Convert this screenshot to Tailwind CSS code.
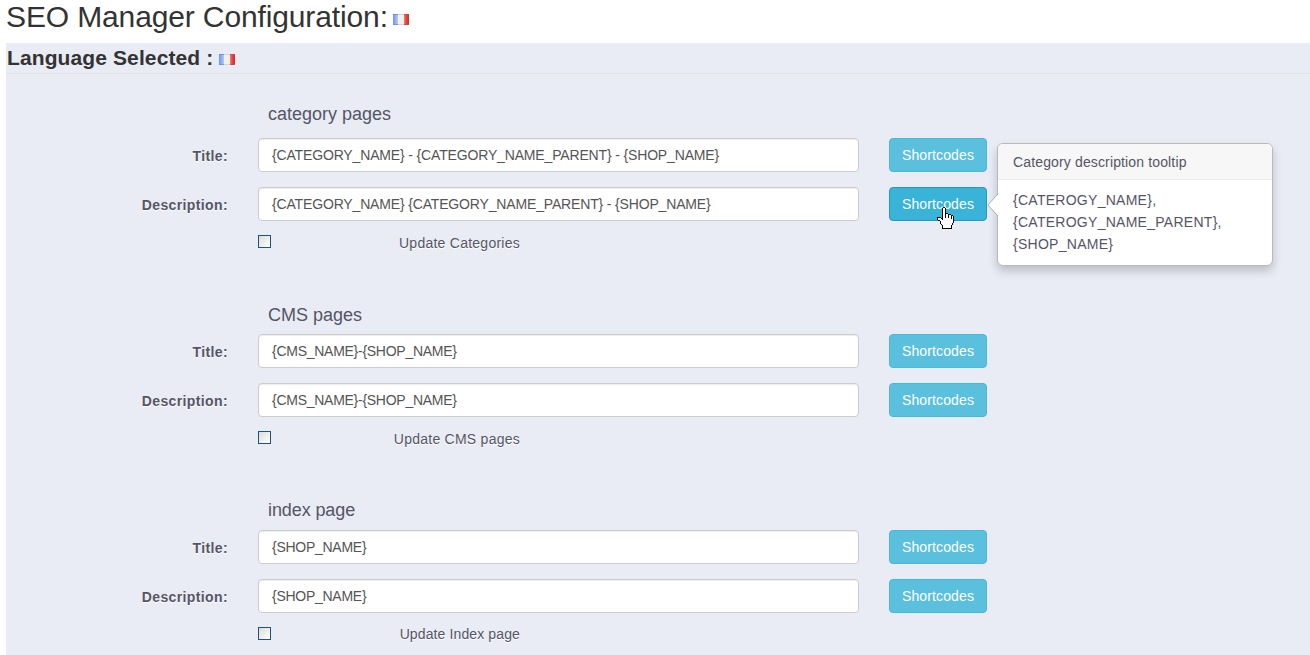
<!DOCTYPE html>
<html lang="en">
<head>
<meta charset="utf-8">
<title>SEO Manager Configuration</title>
<script src="https://cdn.jsdelivr.net/npm/@tailwindcss/browser@4"></script>
</head>
<body class="h-[655px] overflow-hidden bg-white pl-1.5 font-['Liberation_Sans',Arial,sans-serif] text-sm text-[#555566]">
<svg width="0" height="0" class="absolute">
  <defs>
    <linearGradient id="blue"><stop stop-color="#7094ea"/><stop offset="1" stop-color="#c3d3fa"/></linearGradient>
    <linearGradient id="red"><stop stop-color="#f0807a"/><stop offset=".5" stop-color="#e5403a"/><stop offset="1" stop-color="#d92a28"/></linearGradient>
    <symbol id="flag" viewBox="0 0 16 11">
      <rect width="6" height="11" fill="url(#blue)"/>
      <rect x="5" width="6" height="11" fill="#f0f0ee"/>
      <rect x="11" width="5" height="11" fill="url(#red)"/>
      <path d="M0 .5H5M0 10.500H5" stroke="#6f83cc" stroke-opacity=".7"/>
      <path d="M5 .5h6M5 10.500h6" stroke="#d6d3d0"/>
      <path d="M11 .5h5M11 10.500h5" stroke="#c94844" stroke-opacity=".8"/>
    </symbol>
  </defs>
</svg>
<h1 class="flex h-[43px] items-start text-[30px] leading-[33px] text-[#333]"><span class="w-[383px] tracking-[-0.13px] whitespace-nowrap">SEO Manager Configuration:</span><svg class="mt-3.5 ml-1 h-[11px] w-4"><use href="#flag"/></svg></h1>
<main class="h-[612px] bg-[#e9ecf5]">
  <h2 class="flex h-[31px] items-start border-b border-[#e2e4e8] pl-px text-[21px] leading-[30px] font-bold text-[#333]"><span class="w-[206px] tracking-[0.11px] whitespace-nowrap">Language Selected :</span><svg class="mt-[11px] ml-1.5 h-[11px] w-4"><use href="#flag"/></svg></h2>

  <section class="mt-5 h-[196px]">
    <h3 class="h-11 pt-2.5 pl-[262px] text-lg leading-5">category pages</h3>
    <div class="mb-[15px] flex h-[34px] items-center">
      <label class="w-[222px] pt-0.5 text-right font-bold tracking-[0.38px] text-shadow-[0_1px_0_#fff]">Title:</label>
      <div class="ml-[30px] flex h-[34px] w-[601px] items-center rounded-[4px] border border-[#ccc] bg-white px-[13px] tracking-[-0.155px] text-[#555] shadow-[inset_0_1px_1px_#00000013]">{CATEGORY_NAME} - {CATEGORY_NAME_PARENT} - {SHOP_NAME}</div>
      <button class="ml-[30px] h-[34px] w-[98px] rounded-[4px] border border-[#46b8da] bg-[#5bc0de] tracking-[0.12px] text-white">Shortcodes</button>
    </div>
    <div class="relative mb-[14px] flex h-[34px] items-center">
      <label class="w-[222px] pt-0.5 text-right font-bold tracking-[0.38px] text-shadow-[0_1px_0_#fff]">Description:</label>
      <div class="ml-[30px] flex h-[34px] w-[601px] items-center rounded-[4px] border border-[#ccc] bg-white px-[13px] tracking-[-0.16px] text-[#555] shadow-[inset_0_1px_1px_#00000013]">{CATEGORY_NAME} {CATEGORY_NAME_PARENT} - {SHOP_NAME}</div>
      <button class="ml-[30px] h-[34px] w-[98px] rounded-[4px] border border-[#269abc] bg-[#39b3d7] tracking-[0.12px] text-white">Shortcodes</button>
      <svg class="absolute top-[19px] left-[930px]" width="18" height="23" shape-rendering="crispEdges"><path d="M6.500 13V2.500L7.500 1.500H8.500L9.500 2.500V7.500H11.500L12.500 8.500H14.500L15.500 9.500H16.500L17.500 11V16.500L15.500 19.500V22.500H6.500V19.500L4.500 17.500V15.500L1.500 13.500V11.500H4.500Z" fill="#fff" stroke="#000"/><path d="M9.500 7V12M12.500 8V12M15.500 9V13" stroke="#000"/></svg>
      <div class="absolute -top-[44px] left-[991px] h-[123px] w-[276px] rounded-md border border-[#b9bac0] bg-white shadow-[0_5px_10px_#00000033]">
        <svg class="absolute top-[50px] -left-[11px]" width="12" height="22"><path d="M11 0L.8 11L11 22" fill="#fff" stroke="#a9aab0"/><path d="M11.500 0V22" stroke="#fff"/></svg>
        <div class="h-9 rounded-t-[5px] border-b border-[#ebebeb] bg-[#f7f7f7] pl-[15px] leading-9 tracking-[0.14px]">Category description tooltip</div>
        <div class="pt-[9px] pl-[15px] leading-[22px] tracking-[0.27px]"><p>{CATEROGY_NAME},</p><p>{CATEROGY_NAME_PARENT},</p><p>{SHOP_NAME}</p></div>
      </div>
    </div>
    <div class="flex h-4 items-start pl-[252px]">
      <span class="h-[13px] w-[13px] border border-[#1c5180] bg-linear-to-br from-[#dcdcd7] to-white"></span>
      <label class="w-[249px] text-right leading-4 tracking-[0.25px] text-shadow-[0_1px_0_#fff]">Update Categories</label>
    </div>
  </section>

  <section class="h-[196px]">
    <h3 class="h-11 pt-[15px] pl-[262px] text-lg leading-5">CMS pages</h3>
    <div class="mb-[15px] flex h-[34px] items-center">
      <label class="w-[222px] pt-0.5 text-right font-bold tracking-[0.38px] text-shadow-[0_1px_0_#fff]">Title:</label>
      <div class="ml-[30px] flex h-[34px] w-[601px] items-center rounded-[4px] border border-[#ccc] bg-white px-[13px] tracking-[-0.27px] text-[#555] shadow-[inset_0_1px_1px_#00000013]">{CMS_NAME}-{SHOP_NAME}</div>
      <button class="ml-[30px] h-[34px] w-[98px] rounded-[4px] border border-[#46b8da] bg-[#5bc0de] tracking-[0.12px] text-white">Shortcodes</button>
    </div>
    <div class="mb-[14px] flex h-[34px] items-center">
      <label class="w-[222px] pt-0.5 text-right font-bold tracking-[0.38px] text-shadow-[0_1px_0_#fff]">Description:</label>
      <div class="ml-[30px] flex h-[34px] w-[601px] items-center rounded-[4px] border border-[#ccc] bg-white px-[13px] tracking-[-0.27px] text-[#555] shadow-[inset_0_1px_1px_#00000013]">{CMS_NAME}-{SHOP_NAME}</div>
      <button class="ml-[30px] h-[34px] w-[98px] rounded-[4px] border border-[#46b8da] bg-[#5bc0de] tracking-[0.12px] text-white">Shortcodes</button>
    </div>
    <div class="flex h-4 items-start pl-[252px]">
      <span class="h-[13px] w-[13px] border border-[#1c5180] bg-linear-to-br from-[#dcdcd7] to-white"></span>
      <label class="w-[249px] text-right leading-4 tracking-[0.25px] text-shadow-[0_1px_0_#fff]">Update CMS pages</label>
    </div>
  </section>

  <section class="h-[196px]">
    <h3 class="h-11 pt-3.5 pl-[262px] text-lg leading-5 tracking-[-0.1px]">index page</h3>
    <div class="mb-[15px] flex h-[34px] items-center">
      <label class="w-[222px] pt-0.5 text-right font-bold tracking-[0.38px] text-shadow-[0_1px_0_#fff]">Title:</label>
      <div class="ml-[30px] flex h-[34px] w-[601px] items-center rounded-[4px] border border-[#ccc] bg-white px-[13px] tracking-[-0.27px] text-[#555] shadow-[inset_0_1px_1px_#00000013]">{SHOP_NAME}</div>
      <button class="ml-[30px] h-[34px] w-[98px] rounded-[4px] border border-[#46b8da] bg-[#5bc0de] tracking-[0.12px] text-white">Shortcodes</button>
    </div>
    <div class="mb-[14px] flex h-[34px] items-center">
      <label class="w-[222px] pt-0.5 text-right font-bold tracking-[0.38px] text-shadow-[0_1px_0_#fff]">Description:</label>
      <div class="ml-[30px] flex h-[34px] w-[601px] items-center rounded-[4px] border border-[#ccc] bg-white px-[13px] tracking-[-0.27px] text-[#555] shadow-[inset_0_1px_1px_#00000013]">{SHOP_NAME}</div>
      <button class="ml-[30px] h-[34px] w-[98px] rounded-[4px] border border-[#46b8da] bg-[#5bc0de] tracking-[0.12px] text-white">Shortcodes</button>
    </div>
    <div class="flex h-4 items-start pl-[252px]">
      <span class="h-[13px] w-[13px] border border-[#1c5180] bg-linear-to-br from-[#dcdcd7] to-white"></span>
      <label class="w-[249px] text-right leading-[14px] tracking-[0.12px] text-shadow-[0_1px_0_#fff]">Update Index page</label>
    </div>
  </section>
</main>
</body>
</html>
